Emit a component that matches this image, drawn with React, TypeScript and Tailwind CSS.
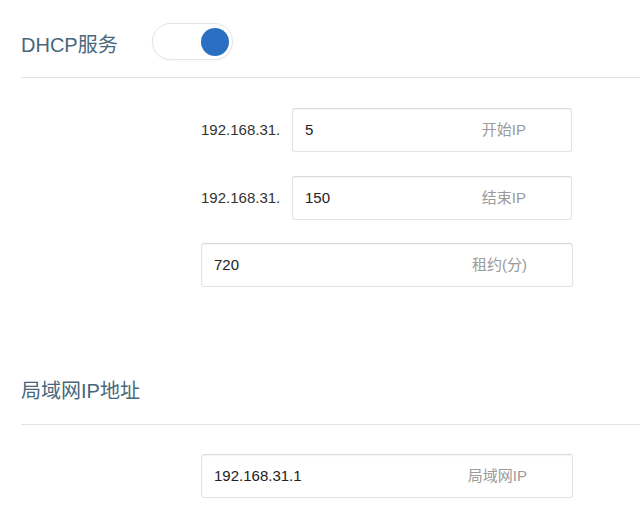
import React from "react";

const font = { fontFamily: '"Liberation Sans", "Noto Sans CJK SC", sans-serif' };

function Field({ value, hint, className }: { value: string; hint: string; className: string }) {
  return (
    <div
      className={`h-[44px] flex items-center justify-between pl-[12px] pr-[45px] bg-white border border-[#e3e3e3] border-t-[#dadada] rounded-[3px] shadow-[inset_0_1px_2px_rgba(0,0,0,0.05)] ${className}`}
    >
      <span className="text-[15px] text-[#222]">{value}</span>
      <span className="text-[15px] text-[#9a9a9a]">{hint}</span>
    </div>
  );
}

function Row({ value, hint }: { value: string; hint: string }) {
  return (
    <div className="flex items-center">
      <span className="w-[91px] text-[15px] text-[#333]">192.168.31.</span>
      <Field value={value} hint={hint} className="w-[280px]" />
    </div>
  );
}

export default function App() {
  return (
    <div className="w-[640px] h-[520px] bg-white overflow-hidden pl-[21px]" style={font}>
      <div className="pt-[23px] flex items-start">
        <div className="pt-[8px] text-[20px] leading-[28px] text-[#48677c] w-[131px]">DHCP服务</div>
        <div className="w-[81px] h-[37px] rounded-full border border-[#e4e4e4] bg-white shadow-[0_1px_2px_rgba(0,0,0,0.04)] flex items-center justify-end pr-[3px]">
          <div className="w-[28px] h-[28px] rounded-full bg-[#2b6fc2]" />
        </div>
      </div>
      <div className="mt-[17px] border-t border-[#e2e2e2]" />
      <div className="pl-[180px] pt-[30px] flex flex-col">
        <Row value="5" hint="开始IP" />
        <div className="h-[24px]" />
        <Row value="150" hint="结束IP" />
        <div className="h-[23px]" />
        <Field value="720" hint="租约(分)" className="w-[372px]" />
      </div>
      <div className="mt-[90px] text-[20px] leading-[28px] text-[#48677c]">局域网IP地址</div>
      <div className="mt-[19px] border-t border-[#e2e2e2]" />
      <div className="pl-[180px] pt-[29px]">
        <Field value="192.168.31.1" hint="局域网IP" className="w-[372px]" />
      </div>
    </div>
  );
}
